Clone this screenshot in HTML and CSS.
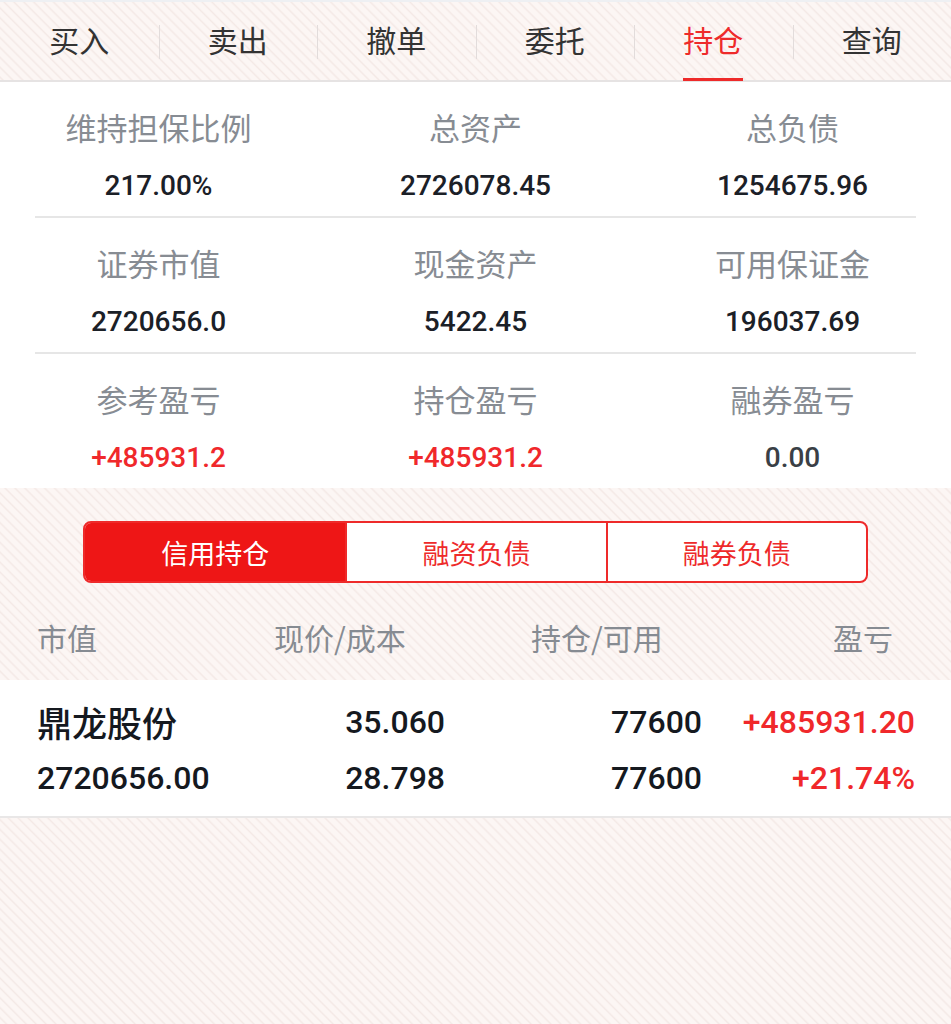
FILE: index.html
```html
<!DOCTYPE html>
<html lang="zh-CN">
<head>
<meta charset="utf-8">
<title>持仓</title>
<link rel="stylesheet" href="styles.css">
</head>
<body>
<div class="page">
  <nav class="tabs">
    <div class="tab">买入</div>
    <div class="tab">卖出</div>
    <div class="tab">撤单</div>
    <div class="tab">委托</div>
    <div class="tab active">持仓</div>
    <div class="tab">查询</div>
  </nav>

  <section class="summary">
    <div class="srow">
      <div class="cell"><div class="label">维持担保比例</div><div class="value">217.00%</div></div>
      <div class="cell"><div class="label">总资产</div><div class="value">2726078.45</div></div>
      <div class="cell"><div class="label">总负债</div><div class="value">1254675.96</div></div>
    </div>
    <div class="divider"></div>
    <div class="srow">
      <div class="cell"><div class="label">证券市值</div><div class="value">2720656.0</div></div>
      <div class="cell"><div class="label">现金资产</div><div class="value">5422.45</div></div>
      <div class="cell"><div class="label">可用保证金</div><div class="value">196037.69</div></div>
    </div>
    <div class="divider"></div>
    <div class="srow">
      <div class="cell"><div class="label">参考盈亏</div><div class="value up">+485931.2</div></div>
      <div class="cell"><div class="label">持仓盈亏</div><div class="value up">+485931.2</div></div>
      <div class="cell"><div class="label">融券盈亏</div><div class="value muted">0.00</div></div>
    </div>
  </section>

  <section class="segwrap">
    <div class="segment">
      <div class="seg on">信用持仓</div>
      <div class="seg">融资负债</div>
      <div class="seg">融券负债</div>
    </div>
  </section>

  <div class="thead">
    <div class="th">市值</div>
    <div class="th">现价/成本</div>
    <div class="th">持仓/可用</div>
    <div class="th right">盈亏</div>
  </div>

  <div class="list">
    <div class="item">
      <div class="name">鼎龙股份</div>
      <div class="num">35.060</div>
      <div class="num">77600</div>
      <div class="num up">+485931.20</div>
      <div class="num left">2720656.00</div>
      <div class="num">28.798</div>
      <div class="num">77600</div>
      <div class="num up">+21.74%</div>
    </div>
  </div>

  <div class="filler"></div>
</div>
</body>
</html>
```

FILE: styles.css
```css
html, body {
  margin: 0;
  padding: 0;
}
body {
  width: 951px;
  height: 1024px;
  overflow: hidden;
  font-family: "Noto Sans CJK SC", "Noto Sans", sans-serif;
  background: #fcf6f4;
}
.page {
  display: flex;
  flex-direction: column;
  height: 1024px;
  background: repeating-linear-gradient(45deg, #fcf6f4 0 3px, #f4e9e6 4.5px, #fcf6f4 6px 7px);
}

/* top tabs */
.tabs {
  display: grid;
  grid-template-columns: repeat(6, 1fr);
  box-sizing: border-box;
  height: 82px;
  border-top: 2px solid #eef0f3;
  border-bottom: 2px solid #e6e3e3;
}
.tab {
  position: relative;
  display: flex;
  align-items: center;
  justify-content: center;
  font-size: 30px;
  color: #333;
  padding-bottom: 4px;
}
.tab + .tab::before {
  content: "";
  position: absolute;
  left: 0;
  top: 23px;
  height: 34px;
  width: 1px;
  background: #e2dcdb;
}
.tab.active {
  color: #ee2a2a;
}
.tab.active::after {
  content: "";
  position: absolute;
  left: 50%;
  bottom: -1px;
  width: 60px;
  margin-left: -30px;
  height: 3px;
  background: #ee2a2a;
}

/* summary */
.summary {
  background: #fff;
}
.srow {
  display: grid;
  grid-template-columns: repeat(3, 1fr);
  height: 134px;
}
.cell {
  display: flex;
  flex-direction: column;
  align-items: center;
  padding-top: 27px;
}
.label {
  font-size: 31px;
  line-height: 36px;
  color: #878c93;
}
.value {
  margin-top: 23px;
  font-family: Roboto, "Noto Sans", sans-serif;
  font-weight: 500;
  font-size: 28px;
  line-height: 36px;
  color: #1b2027;
}
.value.up { color: #f0282b; }
.value.muted { color: #3a3f46; }
.divider {
  height: 2px;
  margin: 0 35px;
  background: #e6e6e6;
}

/* segmented control */
.segwrap {
  display: flex;
  justify-content: center;
  padding-top: 33px;
}
.segment {
  display: grid;
  grid-template-columns: repeat(3, 1fr);
  width: 785px;
  height: 62px;
  box-sizing: border-box;
  border: 2px solid #ee2a2a;
  border-radius: 8px;
  overflow: hidden;
  background: #fff;
}
.seg {
  display: flex;
  align-items: center;
  justify-content: center;
  font-size: 27px;
  color: #ee2a2a;
}
.seg + .seg {
  border-left: 2px solid #ee2a2a;
}
.seg.on {
  background: #ee1616;
  color: #fff;
}

/* table header */
.thead {
  display: grid;
  grid-template-columns: 237px 257px 1fr auto;
  padding: 36px 58px 25px 37px;
}
.th {
  font-size: 30px;
  line-height: 36px;
  color: #868b92;
}
.th.right { text-align: right; }

/* list */
.list {
  background: #fff;
  border-bottom: 2px solid #e9e7e7;
}
.item {
  display: grid;
  grid-template-columns: 220px 188px 257px 213px;
  padding: 14px 36px 10px 37px;
}
.name {
  font-size: 35px;
  font-weight: 500;
  line-height: 56px;
  color: #15191f;
}
.num {
  font-family: Roboto, "Noto Sans", sans-serif;
  font-weight: 500;
  font-size: 32px;
  line-height: 56px;
  color: #15191f;
  text-align: right;
  white-space: nowrap;
}
.num.left { text-align: left; }
.num.up { color: #f0282b; }

.filler {
  flex: 1;
}
```
